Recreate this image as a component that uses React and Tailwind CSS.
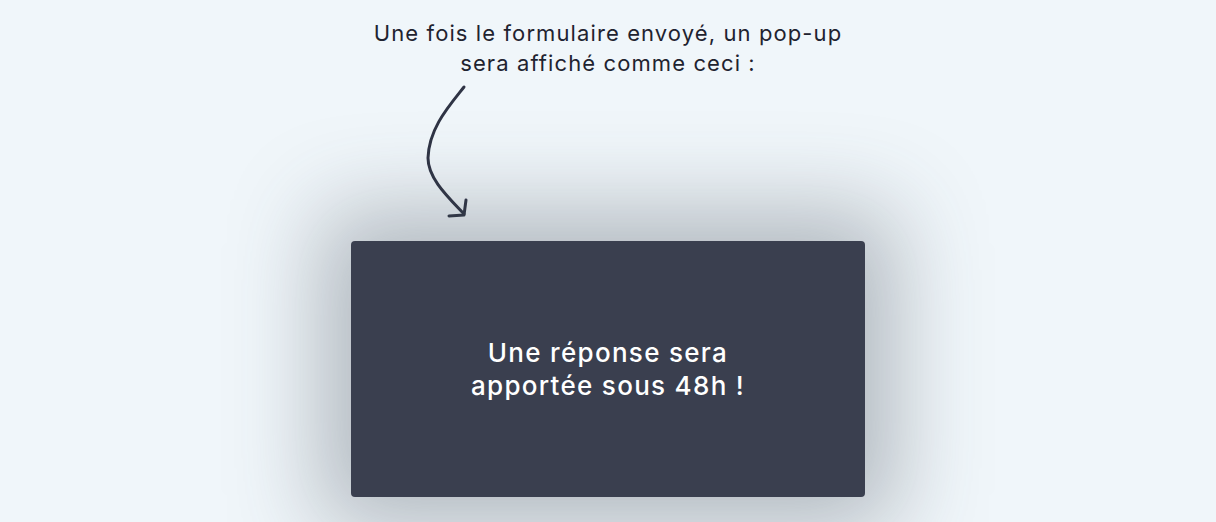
export default function App() {
  return (
    <div
      className="w-[1216px] h-[522px] overflow-hidden bg-[#f0f6fa] flex flex-col items-center pt-[18px]"
      style={{ fontFamily: "Inter, 'Noto Sans', sans-serif" }}
    >
      <p className="text-[22px] leading-[30px] tracking-[1.1px] text-[#1f2330] text-center w-[560px]">
        Une fois le formulaire envoyé, un pop-up
        <br />
        sera affiché comme ceci :
      </p>

      <div className="w-[514px] h-[163px]">
        <svg width="60" height="165" viewBox="0 0 60 165" fill="none" className="ml-[60px]">
          <path
            d="M53 9 C 38 28, 18 50, 17 80 C 17 100, 36 118, 53 136"
            stroke="#2f3445"
            strokeWidth="3"
            strokeLinecap="round"
          />
          <path
            d="M38 138 L53 137 L55 122"
            stroke="#2f3445"
            strokeWidth="3"
            strokeLinecap="round"
            strokeLinejoin="round"
          />
        </svg>
      </div>

      <div className="w-[514px] h-[256px] rounded-[4px] bg-[#3a3f4f] shadow-[0_0_90px_30px_rgba(60,68,80,0.35)] flex items-center justify-center">
        <p className="text-[26px] leading-[33px] font-medium tracking-[1.3px] text-white text-center">
          Une réponse sera
          <br />
          apportée sous 48h !
        </p>
      </div>
    </div>
  );
}
